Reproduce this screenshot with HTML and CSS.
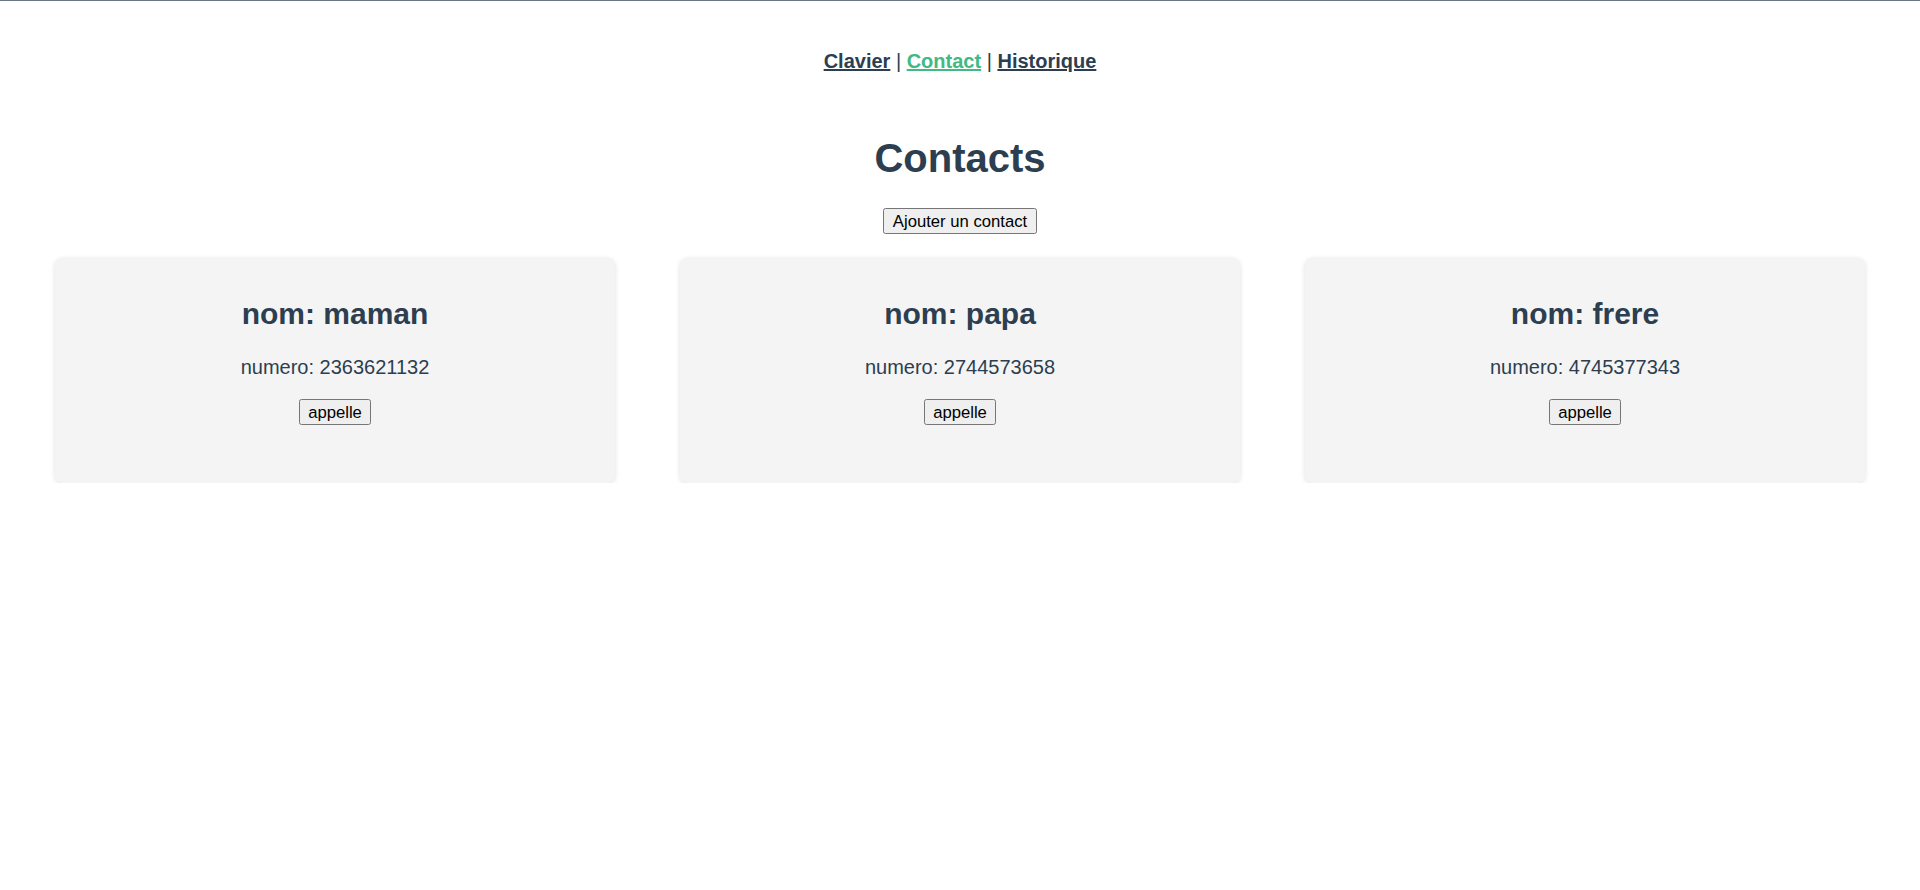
FILE: index.html
```html
<!DOCTYPE html>
<html lang="fr">
<head>
<meta charset="utf-8">
<title>Contacts</title>
<link rel="stylesheet" href="styles.css">
</head>
<body>
<div class="app">
  <nav class="nav">
    <a href="#" class="nav-link">Clavier</a> | <a href="#" class="nav-link active">Contact</a> | <a href="#" class="nav-link">Historique</a>
  </nav>
  <h1 class="title">Contacts</h1>
  <div class="add-row">
    <button class="btn">Ajouter un contact</button>
  </div>
  <div class="cards">
    <div class="card">
      <h2 class="card-name">nom: maman</h2>
      <p class="card-num">numero: 2363621132</p>
      <button class="btn">appelle</button>
    </div>
    <div class="card">
      <h2 class="card-name">nom: papa</h2>
      <p class="card-num">numero: 2744573658</p>
      <button class="btn">appelle</button>
    </div>
    <div class="card">
      <h2 class="card-name">nom: frere</h2>
      <p class="card-num">numero: 4745377343</p>
      <button class="btn">appelle</button>
    </div>
  </div>
</div>
</body>
</html>
```

FILE: styles.css
```css
html {
  border-top: 1px solid #6b7785;
  background: #ffffff;
}

body {
  margin: 9px 10px 10px;
  font-family: "Liberation Sans", Arial, Helvetica, sans-serif;
  color: #2c3e50;
  text-align: center;
}

.nav {
  padding: 40px 0 35px;
  font-size: 20px;
  line-height: 23px;
}

.nav-link {
  font-weight: bold;
  color: #2c3e50;
  text-decoration: underline;
}

.nav-link.active {
  color: #42b983;
}

.title {
  margin: 27px 0;
  font-size: 40px;
  line-height: 46px;
  font-weight: bold;
}

.add-row {
  height: 26px;
  margin-bottom: 24px;
}

.btn {
  font-family: "Liberation Sans", Arial, sans-serif;
  font-size: 16.67px;
  line-height: 19px;
  color: #000000;
  background: #efefef;
  border: 1px solid #767676;
  border-radius: 2.5px;
  padding: 2.5px 8.5px;
  margin: 0;
  height: 26px;
  vertical-align: top;
}

.cards {
  display: flex;
  gap: 65px;
  padding-left: 45px;
}

.card {
  box-sizing: border-box;
  width: 560px;
  height: 225px;
  padding: 14px 10px 10px;
  background: #f4f4f4;
  border-radius: 8px;
  box-shadow: 0 1px 5px rgba(0, 0, 0, 0.13);
}

.card-name {
  margin: 25px 0;
  font-size: 30px;
  line-height: 34px;
  font-weight: bold;
}

.card-num {
  margin: 25px 0 20px;
  font-size: 20px;
  line-height: 23px;
}
```
